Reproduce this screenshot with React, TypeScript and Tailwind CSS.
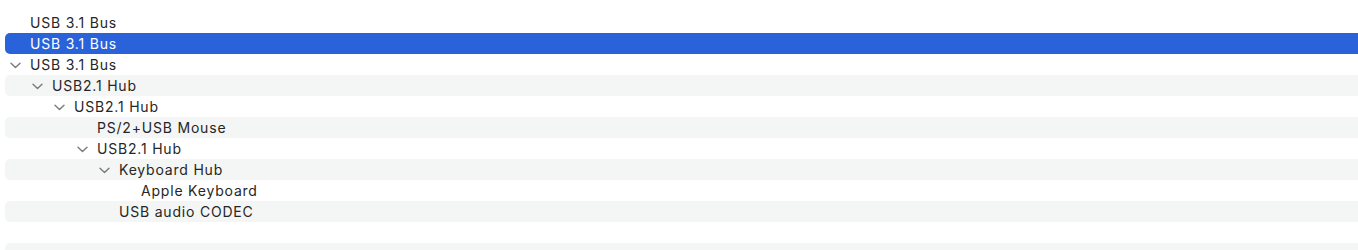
type Row = { label: string; level: number; open?: boolean };

const rows: Row[] = [
  { label: 'USB 3.1 Bus', level: 0 },
  { label: 'USB 3.1 Bus', level: 0 },
  { label: 'USB 3.1 Bus', level: 0, open: true },
  { label: 'USB2.1 Hub', level: 1, open: true },
  { label: 'USB2.1 Hub', level: 2, open: true },
  { label: 'PS/2+USB Mouse', level: 3 },
  { label: 'USB2.1 Hub', level: 3, open: true },
  { label: 'Keyboard Hub', level: 4, open: true },
  { label: 'Apple Keyboard', level: 5 },
  { label: 'USB audio CODEC', level: 4 },
  { label: '', level: 0 },
  { label: '', level: 0 },
];

// padding per depth, text starts at 30 / 52 / 74 / 97 / 119 / 141
const indent = ['pl-[5px]', 'pl-[27px]', 'pl-[49px]', 'pl-[72px]', 'pl-[94px]', 'pl-[116px]'];

const Chevron = () => (
  <svg width="11" height="7" viewBox="0 0 11 7" fill="none" className="text-[#7b7b7b]">
    <path d="M1 1.2 L5.5 5.6 L10 1.2" stroke="currentColor" strokeWidth="1.4" strokeLinecap="round" strokeLinejoin="round" />
  </svg>
);

export default function App() {
  const selected = 1;
  return (
    <div className="w-[1358px] h-[250px] overflow-hidden bg-white pt-3 font-['Inter',sans-serif] text-[14px] tracking-[0.8px]">
      {rows.map((row, i) => {
        const isSel = i === selected;
        const striped = i % 2 === 1;
        return (
          <div
            key={i}
            className={`ml-[5px] h-[21px] flex items-center rounded-l-[5px] ${indent[row.level]} ${
              isSel ? 'bg-[#2a62d9] text-white' : striped ? 'bg-[#f4f5f5] text-[#262626]' : 'text-[#262626]'
            }`}
          >
            <div className="w-[20px] flex items-center pt-[1px]">{row.open && <Chevron />}</div>
            <span className="leading-none">{row.label}</span>
          </div>
        );
      })}
    </div>
  );
}
